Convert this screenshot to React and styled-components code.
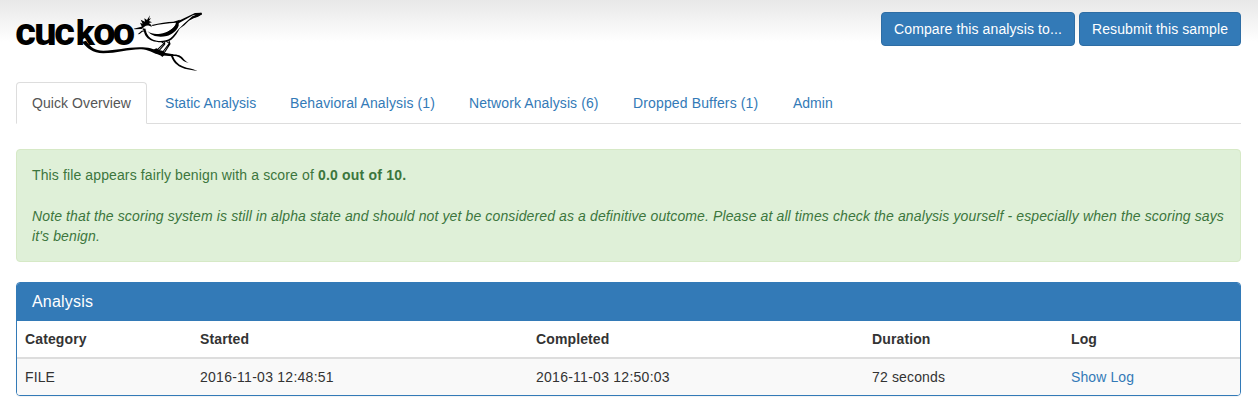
import React from "react";
import styled, { createGlobalStyle } from "styled-components";

const GlobalStyle = createGlobalStyle`
  * { box-sizing: border-box; }
  body {
    margin: 0;
    background: #fff;
    color: #333;
    font: 14px/20px "Liberation Sans", Arial, sans-serif;
  }
`;

const Page = styled.div`
  min-height: 411px;
  padding: 12px 17px 0 16px;
  background: linear-gradient(to bottom, #e8e8e8, #fff 42px) no-repeat;
`;

const Header = styled.header`
  display: flex;
  justify-content: space-between;
  align-items: flex-start;
  height: 70px;
`;

const LogoSvg = styled.svg`
  display: block;
  width: 187px;
  height: 60px;
  overflow: visible;
`;

const Actions = styled.div`
  display: flex;
  gap: 4px;
`;

const Button = styled.button`
  width: ${(p) => p.$width}px;
  height: 34px;
  padding: 0 12px;
  border: 1px solid #2e6da4;
  border-radius: 4px;
  background: #337ab7;
  color: #fff;
  font: inherit;
  letter-spacing: 0.11px;
  white-space: nowrap;
`;

const Tabs = styled.nav`
  display: flex;
  gap: 2px;
  height: 42px;
  border-bottom: 1px solid #ddd;
`;

const Tab = styled.a`
  width: ${(p) => p.$width}px;
  height: 42px;
  padding: 10px 0 10px 15px;
  border: 1px solid ${(p) => (p.$active ? "#ddd" : "transparent")};
  border-bottom-color: ${(p) => (p.$active ? "#fff" : "transparent")};
  border-radius: 4px 4px 0 0;
  background: ${(p) => (p.$active ? "#fff" : "transparent")};
  color: ${(p) => (p.$active ? "#555" : "#337ab7")};
  letter-spacing: ${(p) => p.$spacing}px;
  white-space: nowrap;
`;

const Alert = styled.section`
  height: 113px;
  margin: 25px 0 20px;
  padding: 15px;
  border: 1px solid #d6e9c6;
  border-radius: 4px;
  background: #dff0d8;
  color: #3c763d;
  letter-spacing: 0.12px;
`;

const Score = styled.p`
  margin: 0 0 21px;
`;

const ScoreValue = styled.strong`
  letter-spacing: 0.2px;
`;

const Note = styled.em`
  display: block;
`;

const Panel = styled.section`
  height: 114px;
  border: 1px solid #337ab7;
  border-radius: 4px;
  overflow: hidden;
  box-shadow: 0 1px 1px rgba(0, 0, 0, 0.05);
`;

const PanelTitle = styled.h3`
  height: 38px;
  margin: 0;
  padding: 9px 15px;
  background: #337ab7;
  color: #fff;
  font-size: 16px;
  font-weight: 400;
  letter-spacing: 0.2px;
`;

const Table = styled.table`
  width: 100%;
  table-layout: fixed;
  border-collapse: separate;
  border-spacing: 0;
`;

const HeadCell = styled.th`
  width: ${(p) => p.$width}px;
  height: 38px;
  padding: 8px;
  border-bottom: 2px solid #ddd;
  text-align: left;
  vertical-align: top;
  letter-spacing: 0.12px;
`;

const Cell = styled.td`
  height: 36px;
  padding: 8px;
  background: #f9f9f9;
  letter-spacing: ${(p) => p.$spacing || 0.1}px;
`;

const Link = styled.a`
  color: #337ab7;
`;

const Logo = () => (
  <LogoSvg viewBox="48 36 561 180" role="img" aria-label="cuckoo">
    <text
      x="46 103 163"
      y="136"
      fontFamily="Roboto, Arial, sans-serif"
      fontWeight="800"
      fontSize="119"
    >
      cuc
      <tspan x="227" fontSize="106">k</tspan>
      <tspan x="280 338">oo</tspan>
    </text>
    <path d="M258 122C272 141 285 152 310 152C350 152 385 140 428 142C452 143 466 150 483 157L520 163L516 169L480 166C459 159 445 149 424 148C388 147 350 160 310 160C277 159 261 144 246 126Z" />
    <path d="M511 163C529 163 540 165 548 173C554 180 558 185 566 188C553 187 547 180 541 174C534 169 526 168 519 168C524 182 533 192 548 199C565 206 578 206 592 213C574 210 557 209 543 202C525 193 516 180 512 165Z" />
    <path d="M433 90C438 106 445 118 458 121C475 127 496 126 510 117C521 108 529 96 542 83L594 49L604 40L586 38L534 64C509 65 484 70 458 77L448 70Z" fill="#fff" />
    <path d="M401 86L424 80C430 73 438 70 447 72C452 74 454 77 456 82C449 76 440 75 433 80L425 87L404 88Z" />
    <path d="M413 103L425 92L439 90L435 94L427 95L419 102Z" />
    <path d="M425 79L420 68L428 71L422 59L435 65L433 55L441 60L450 46L447 57L453 54L447 63L456 67L447 69L456 77L440 74Z" />
    <path d="M428 85L439 87L434 91L428 89Z" />
    <path d="M431 88L438 92C441 106 449 113 460 119C476 126 498 124 511 115C522 106 528 93 540 83C533 98 525 109 514 119C497 129 473 128 456 122C442 117 435 107 432 96Z" />
    <path d="M455 75C479 68 501 66 520 65L540 59L533 72C532 80 526 85 520 90C513 96 507 99 497 99L510 91C520 85 526 77 528 68C503 70 478 72 458 78Z" />
    <path d="M442 93C454 102 467 103 481 101C503 99 516 88 527 76L536 61L536 77C530 93 516 103 500 108C477 113 455 109 442 93Z" />
    <path d="M533 64L585 39L604 38L606 43L594 50L581 55L567 62L553 76L534 89L551 72L577 49L592 43L579 46L552 61L532 72Z" />
    <path d="M580 42L604 38L606 43L590 51L575 54L590 45Z" />
    <path d="M485 126L492 130L470 151M499 124L508 130L486 159M494 126L494 133L477 152M507 122L510 132L493 158" fill="none" stroke="#000" strokeWidth="3.2" />
    <path d="M457 151L469 145L480 151L490 153L497 161L487 171L478 163L464 159Z" />
  </LogoSvg>
);

const tabs = [
  ["Quick Overview", 131, 0.07],
  ["Static Analysis", 123, 0.07],
  ["Behavioral Analysis (1)", 177, 0.11],
  ["Network Analysis (6)", 162, 0.1],
  ["Dropped Buffers (1)", 158, 0.14],
  ["Admin", 72, 0],
];

const columns = [
  ["Category", 175],
  ["Started", 336],
  ["Completed", 336],
  ["Duration", 199],
  ["Log", 177],
];

export default function App() {
  return (
    <>
      <GlobalStyle />
      <Page>
        <Header>
          <Logo />
          <Actions>
            <Button $width={194}>Compare this analysis to...</Button>
            <Button $width={162}>Resubmit this sample</Button>
          </Actions>
        </Header>
        <Tabs>
          {tabs.map(([label, width, spacing], i) => (
            <Tab key={label} $active={i === 0} $width={width} $spacing={spacing}>
              {label}
            </Tab>
          ))}
        </Tabs>
        <Alert>
          <Score>
            This file appears fairly benign with a score of <ScoreValue>0.0 out of 10.</ScoreValue>
          </Score>
          <Note>
            Note that the scoring system is still in alpha state and should not yet be considered as a definitive outcome. Please at all times check the analysis yourself - especially when the scoring says it's benign.
          </Note>
        </Alert>
        <Panel>
          <PanelTitle>Analysis</PanelTitle>
          <Table>
            <thead>
              <tr>
                {columns.map(([label, width]) => (
                  <HeadCell key={label} $width={width}>{label}</HeadCell>
                ))}
              </tr>
            </thead>
            <tbody>
              <tr>
                <Cell>FILE</Cell>
                <Cell $spacing={0.26}>2016-11-03 12:48:51</Cell>
                <Cell $spacing={0.26}>2016-11-03 12:50:03</Cell>
                <Cell $spacing={0.15}>72 seconds</Cell>
                <Cell><Link>Show Log</Link></Cell>
              </tr>
            </tbody>
          </Table>
        </Panel>
      </Page>
    </>
  );
}
